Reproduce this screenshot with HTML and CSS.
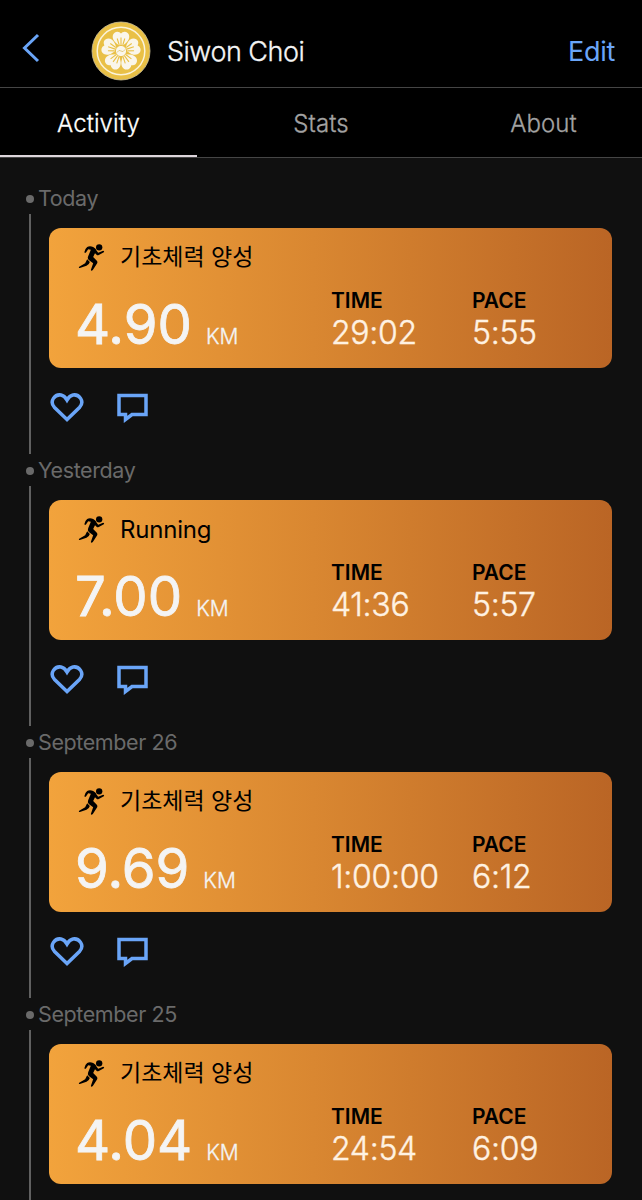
FILE: index.html
```html
<!DOCTYPE html>
<html lang="en">
    <head>
        <meta charset="UTF-8">
        <title>Siwon Choi</title>
        <link rel="stylesheet" href="styles.css">
    </head>
    <body>
        <!-- shared icons -->
        <svg class="sprite" aria-hidden="true">
            <symbol id="runner" viewBox="0 0 80 90">
                <circle cx="63" cy="16" r="9.5"/>
                <path d="M27 15 Q35 11 45 15 Q53 18 54 26 L45 45 L56 56 Q59 59 57 64 L44 84 Q39 89 38 84 L45 64 L32 54 Q27 49 30 43 L38 23 L30 22 L23 32 Q18 34 19 29 Q21 20 27 15 Z"/>
                <path d="M51 20 L60 32 L75 26 Q80 26 77 31 L62 39 Q58 41 56 39 L47 30 Z"/>
                <path d="M27 52 L35 60 Q33 68 25 71 L5 78 Q0 79 3 74 L21 64 Z"/>
            </symbol>
            <symbol id="heart" viewBox="0 0 34 30">
                <path d="M17 26.5 L4.3 14.2 C-1 8 5 1 11 2 C14 2.6 15.5 4.5 17 7 C18.5 4.5 20 2.6 23 2 C29 1 35 8 29.7 14.2 Z"/>
            </symbol>
            <symbol id="comment" viewBox="0 0 32 30">
                <path d="M2 2.5 H29 V21.5 H15 L8.5 26.5 V21.5 H2 Z"/>
            </symbol>
        </svg>

        <header class="header">
            <svg class="back" viewBox="0 0 18 30"><path d="M16 2 L2.5 15 L16 28"/></svg>
            <svg class="avatar" viewBox="-30 -30 60 60">
                <defs>
                    <g id="petal">
                        <path class="white" d="M0 -4 L-5 -8 C-10 -12 -9 -18.5 -4 -19.2 Q-1.5 -19.4 0 -17.5 Q1.5 -19.4 4 -19.2 C9 -18.5 10 -12 5 -8 Z"/>
                        <path class="stamen" d="M0 -6 V-13.5 M-1.8 -6 L-3.8 -12.5 M1.8 -6 L3.8 -12.5"/>
                    </g>
                </defs>
                <circle class="gold" r="29"/>
                <circle class="ring" r="23.8"/>
                <use href="#petal"/>
                <use href="#petal" transform="rotate(72)"/>
                <use href="#petal" transform="rotate(144)"/>
                <use href="#petal" transform="rotate(216)"/>
                <use href="#petal" transform="rotate(288)"/>
                <circle class="core" r="5.6"/>
                <path class="swirl" d="M-4 1.5 Q-2 -2 0 0 T4 -1.5"/>
            </svg>
            <h1 class="name">Siwon Choi</h1>
            <a class="edit">Edit</a>
        </header>

        <nav class="tabs">
            <a class="tab active">Activity</a>
            <a class="tab">Stats</a>
            <a class="tab">About</a>
        </nav>

        <main class="feed">
            <section class="entry">
                <h2 class="date">Today</h2>
                <div class="entry-body">
                    <div class="card">
                        <div class="title"><svg class="runner"><use href="#runner"/></svg><span class="korean">기초체력 양성</span></div>
                        <div class="stats">
                            <div class="distance"><span class="number">4.90</span><span class="unit">KM</span></div>
                            <div class="stat"><span class="label">TIME</span><span class="value">29:02</span></div>
                            <div class="stat"><span class="label">PACE</span><span class="value">5:55</span></div>
                        </div>
                    </div>
                    <div class="actions">
                        <svg class="heart"><use href="#heart"/></svg>
                        <svg class="comment"><use href="#comment"/></svg>
                    </div>
                </div>
            </section>

            <section class="entry">
                <h2 class="date">Yesterday</h2>
                <div class="entry-body">
                    <div class="card">
                        <div class="title"><svg class="runner"><use href="#runner"/></svg><span>Running</span></div>
                        <div class="stats">
                            <div class="distance"><span class="number">7.00</span><span class="unit">KM</span></div>
                            <div class="stat"><span class="label">TIME</span><span class="value">41:36</span></div>
                            <div class="stat"><span class="label">PACE</span><span class="value">5:57</span></div>
                        </div>
                    </div>
                    <div class="actions">
                        <svg class="heart"><use href="#heart"/></svg>
                        <svg class="comment"><use href="#comment"/></svg>
                    </div>
                </div>
            </section>

            <section class="entry">
                <h2 class="date">September 26</h2>
                <div class="entry-body">
                    <div class="card">
                        <div class="title"><svg class="runner"><use href="#runner"/></svg><span class="korean">기초체력 양성</span></div>
                        <div class="stats">
                            <div class="distance"><span class="number">9.69</span><span class="unit">KM</span></div>
                            <div class="stat"><span class="label">TIME</span><span class="value">1:00:00</span></div>
                            <div class="stat"><span class="label">PACE</span><span class="value">6:12</span></div>
                        </div>
                    </div>
                    <div class="actions">
                        <svg class="heart"><use href="#heart"/></svg>
                        <svg class="comment"><use href="#comment"/></svg>
                    </div>
                </div>
            </section>

            <section class="entry">
                <h2 class="date">September 25</h2>
                <div class="entry-body">
                    <div class="card">
                        <div class="title"><svg class="runner"><use href="#runner"/></svg><span class="korean">기초체력 양성</span></div>
                        <div class="stats">
                            <div class="distance"><span class="number">4.04</span><span class="unit">KM</span></div>
                            <div class="stat"><span class="label">TIME</span><span class="value">24:54</span></div>
                            <div class="stat"><span class="label">PACE</span><span class="value">6:09</span></div>
                        </div>
                    </div>
                </div>
            </section>
        </main>
    </body>
</html>
```
FILE: styles.css
```css
* {
    box-sizing: border-box;
}
body {
    margin: 0;
    display: flex;
    flex-direction: column;
    background-color: #101010;
    color: #f4f4f4;
    font-family: Inter, "Noto Sans CJK KR", sans-serif;
}
h1, h2 {
    margin: 0;
    font-weight: 400;
}
svg {
    display: block;
    flex: none;
}
.sprite {
    display: none;
}
.header {
    display: flex;
    align-items: center;
    flex: none;
    height: 88px;
    padding: 14px 27px 0 22px;
    background-color: #000;
    border-bottom: 1px solid #454545;
}
.back {
    width: 18px;
    height: 30px;
    margin-top: -5px;
    fill: none;
    stroke: #6aa5f8;
    stroke-width: 3;
}
.avatar {
    width: 60px;
    height: 60px;
    margin-left: 51px;
}
.gold {
    fill: #e9c046;
    stroke: #cfc39a;
    stroke-width: 0.8;
}
.ring {
    fill: none;
    stroke: #fbf3d9;
    stroke-width: 1.5;
}
.white {
    fill: #faf6ea;
}
.stamen {
    fill: none;
    stroke: #e9c046;
    stroke-width: 1.1;
}
.core {
    fill: #faf6ea;
    stroke: #e9c046;
    stroke-width: 1;
}
.swirl {
    fill: none;
    stroke: #e0c778;
    stroke-width: 0.9;
}
.name {
    margin: 2px 0 0 16px;
    font-size: 27px;
    font-weight: 300;
    letter-spacing: -0.5px;
    -webkit-text-stroke: 0.3px;
}
.edit {
    margin: 2px 0 0 auto;
    font-size: 27px;
    letter-spacing: -0.3px;
    color: #6aa5f8;
}
.tabs {
    display: flex;
    flex: none;
    height: 70px;
    background-color: #000;
    border-bottom: 1px solid #454545;
}
.tab {
    width: 197px;
    padding-top: 3px;
    line-height: 66px;
    text-align: center;
    font-size: 24px;
    font-weight: 300;
    letter-spacing: 0.1px;
    -webkit-text-stroke: 0.3px;
    color: #a3a3a3;
}
.tab:nth-child(2) {
    flex: 1;
}
.tab.active {
    color: #fff;
    border-bottom: 2px solid #ddd5db;
}
.feed {
    padding: 26px 30px 0 26px;
}
.entry {
    height: 272px;
}
.entry:last-child {
    height: 200px;
}
.date {
    display: flex;
    align-items: center;
    height: 30px;
    padding-bottom: 2px;
    font-size: 21.5px;
    letter-spacing: -0.4px;
    color: #6a6a6a;
}
.date::before {
    content: "";
    width: 8px;
    height: 8px;
    margin: 2px 4px 0 0;
    border-radius: 50%;
    background-color: #6a6a6a;
}
.entry-body {
    height: 240px;
    margin-left: 3px;
    padding: 14px 0 0 18px;
    border-left: 2px solid #606060;
}
.entry:last-child .entry-body {
    height: 170px;
}
.card {
    height: 140px;
    padding: 13px 0 0 26px;
    border-radius: 12px;
    background: linear-gradient(to right, #f2a33c, #d98731 47%, #ba6525);
}
.title {
    display: flex;
    align-items: center;
    height: 32px;
    font-size: 24px;
    letter-spacing: -0.2px;
    color: #000;
}
.korean {
    margin-top: -4px;
    font-size: 23px;
    letter-spacing: 0;
}
.runner {
    width: 27px;
    height: 30px;
    margin: 0 15px 0 3px;
}
.stats {
    display: grid;
    grid-template-columns: 256px 141px 1fr;
    margin-top: 14px;
}
.distance {
    line-height: 74px;
}
.number {
    font-size: 54.5px;
    font-weight: 400;
    -webkit-text-stroke: 0.8px;
}
.unit {
    margin-left: 14px;
    font-size: 21px;
    font-weight: 300;
    -webkit-text-stroke: 0.3px;
}
.stat {
    display: flex;
    flex-direction: column;
    margin-top: -1px;
}
.label {
    line-height: 29px;
    font-size: 21px;
    font-weight: 600;
    color: #000;
}
.value {
    line-height: 36px;
    font-size: 32px;
    font-weight: 300;
    letter-spacing: -0.3px;
    -webkit-text-stroke: 0.4px;
    color: #fff2e2;
}
.actions {
    display: flex;
    gap: 33px;
    padding: 25px 0 0 1px;
    fill: none;
    stroke: #6aa5f8;
    stroke-width: 3.5;
}
.heart {
    width: 34px;
    height: 30px;
}
.comment {
    width: 32px;
    height: 30px;
}
```
